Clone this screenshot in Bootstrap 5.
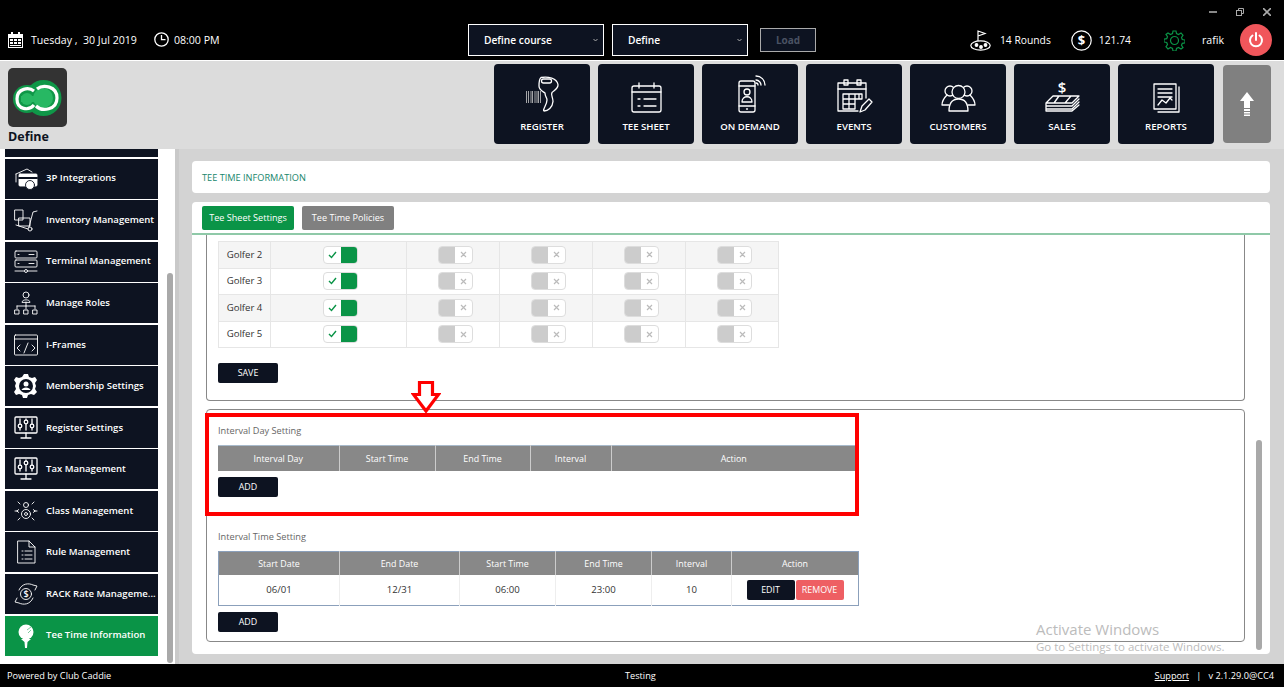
<!DOCTYPE html>
<html lang="en">
<head>
<meta charset="utf-8">
<title>Tee Time Information</title>
<link href="https://cdn.jsdelivr.net/npm/bootstrap@5.3.0/dist/css/bootstrap.min.css" rel="stylesheet">
<style>
html,body{height:687px;overflow:hidden}
body{position:relative;width:1284px;font-family:"Open Sans","Liberation Sans",sans-serif;font-size:10px;background:#000;color:#222}
svg{display:block;flex:none}
.ink{fill:none;stroke:#fff;stroke-width:1.3;stroke-linecap:round;stroke-linejoin:round}
.topbar{height:60px;background:#000;color:#fff;font-size:10.6px}
.chrome{height:24px;padding-right:13px;gap:19px}
.mainrow{height:32px;padding:0 12px 0 8px}
.mainrow span{padding-top:2px}
.leftpart{width:460px;gap:8px}
.timegap{margin-left:-3px}
.stat{font-size:10.3px}
.pick{width:136px;height:32px;background:#0d1321;border:1px solid #fff;color:#fff;font-size:10.2px;font-weight:600;padding-left:15px;padding-right:5px;margin-right:8px}
.loadbtn{width:56px;height:24px;margin-left:4px;background:#0d1321;border:1px solid #aaa;color:#4a5263;font-size:10px;font-weight:700}
.powerbtn{width:32px;height:32px;background:#f0565b;margin-left:16px}
.g9{margin-left:9px}.g20{margin-left:20px}.g7{margin-left:7px}.g33{margin-left:33px}.g17{margin-left:17px}
.white-line{height:1px;background:#fff}
.headband{height:88px;background:#dcdcdc;padding:3px 13px 0 8px}
.logobox{width:59px;height:59px;margin-top:4px;background:#333;border-radius:5px}
.logoname{font-size:12.5px;font-weight:700;color:#0d1321;line-height:18px;margin-top:1px}
.tilewrap{gap:8px;padding-right:9px}
.tile{width:96px;height:80px;background:#0d1321;color:#fff;border-radius:4px;font-size:9.6px;font-weight:600;padding-top:11px}
.tile svg{height:38px;width:44px}
.tile span{line-height:14px;margin-top:7px}
.upbtn{width:48px;height:78px;margin-top:1px;background:#808080;border-radius:4px}
.bodyrow{height:515px}
.sidepanel{position:relative;width:175px;background:#fff;padding-left:5px;overflow:hidden;border-bottom:1px solid #fff}
.sidestub{width:153px;height:8px;background:#0d1321;flex:none}
.sidelist{gap:1.55px}
.sideitem{width:153px;height:40px;flex:none;background:#0d1321;color:#fff;font-size:9.55px;font-weight:600;padding-left:9px;gap:8px;white-space:nowrap;overflow:hidden}
.sideitem svg{width:24px;height:24px}
.sideitem .ink{stroke-width:.9}
.sideitem.current{background:#0a9447}
.edge{width:4px;background:#c9c9c9}
.mainpane{background:#d3d3d3;padding:12px 14px 10px 13px;gap:9px}
.titlecard{height:32px;background:#fff;border-radius:4px;padding:2px 0 0 10px;color:#17866c;font-size:9.2px;flex:none}
.tabcard{background:#fff;border-radius:4px;overflow:hidden;position:relative}
.tabrow{height:33px;padding:4px 0 0 10px;gap:8px;border-bottom:2px solid #8fc9a8;flex:none}
.tabbtn{width:92px;height:24px;border-radius:2px;color:#fff;font-size:9.1px;font-weight:500;border:1px solid transparent;padding:0}
.tabon{background:#0a9447}
.taboff{background:#808080}
.scrollarea{padding:0 25px 12px 14px;gap:8px}
.boxtop{height:166px;border:1px solid #888;border-top:0;border-radius:0 0 4px 4px;padding:6px 12px 0 11px;flex:none}
.boxbottom{height:233px;border:1px solid #888;border-radius:4px;padding:13px 0 0 11px;flex:none}
.sectionlabel{font-size:9.2px;line-height:14px;padding-top:1px;color:#666;margin-bottom:7px}
.sectiongap{margin-top:32px}
.gtbl{width:560px;table-layout:fixed;margin:0;border-collapse:collapse;font-size:9.6px;color:#333;border:0;border-left:1px solid #8ba0bb;border-right:1px solid #8ba0bb;border-bottom:1px solid #8ba0bb}
.gtbl>tbody>tr>td{height:26.5px;padding:0;text-align:center;vertical-align:middle;border:1px solid #e6e6e6}
.gtbl>tbody>tr>td:not(:first-child){padding-left:4px}
.gtbl>tbody>tr.stripe>td{background:#f5f5f5}
.tgl{width:35px;height:18px;border:1px solid #ddd;border-radius:4px;overflow:hidden;margin:auto;background:#fff}
.tgl i{width:50%;height:100%;display:flex;align-items:center;justify-content:center}
.tgl.on i:last-child{background:#0a9447}
.tgl.off i:first-child{background:#ccc}
.darkbtn{display:block;width:60px;height:20px;background:#0d1321;color:#fff;border:0;border-radius:2px;font-size:8.9px;font-weight:500;padding:0}
.gap15{margin-top:15px}
.gap6{margin-top:6px}
.dtbl{table-layout:fixed;margin:0;border-collapse:collapse;font-size:9.6px;color:#333}
.dtbl>thead>tr>th{height:24px;padding:0;background:#888;color:#fff;font-size:8.9px;font-weight:500;text-align:center;vertical-align:middle;border:0;border-left:1px solid #ccc}
.dtbl>thead>tr>th:first-child{border-left:0}
.dtbl>tbody>tr>td{height:30px;padding:0;text-align:center;vertical-align:middle;border:0;border-left:1px solid #eee}
.dtbl>tbody>tr>td:first-child{border-left:0}
.daytable{width:638px;border-top:1px solid #a8bacb}
.daytable>thead>tr>th{height:25px}
.timetable{width:640px;border:1px solid #8ba0bb}
.minirow{gap:1px}
.minibtn{width:48px;height:20px;border:0;border-radius:2px;color:#fff;font-size:8.9px;padding:0}
.minibtn.edit{background:#0d1321;font-weight:500}
.minibtn.rem{background:#ee5f63}
.scrolltrack{position:absolute;width:6px;border-radius:3px;background:#a9a9a9}
.thumb-a{left:167px;top:124px;height:390px}
.thumb-b{right:8px;top:238px;height:210px}
.foot{height:23px;background:#000;color:#fff;font-size:9.2px;padding:0 10px 0 7px}
.foot a{color:#fff}
.footcenter{left:625px;position:absolute}
.redframe{position:absolute;left:205px;top:413px;width:654px;height:103px;border:4px solid #f00}
.redarrow{position:absolute;left:411px;top:380px}
.winmark{position:absolute;left:1036px;top:619px;color:#bcbcbc;pointer-events:none}
.winmark div:first-child{font-size:15px;line-height:20px}
.winmark div:last-child{font-size:11.5px;line-height:16px}
</style>
</head>
<body>
<svg width="0" height="0" class="position-absolute">
  <symbol id="mon" viewBox="0 0 24 24"><g class="ink" stroke-width="1"><rect x="1" y="1" width="22" height="16" rx="1"/><path d="M12 17v4M7 22h10M6 3v11M12 3v11M18 3v11"/><circle cx="6" cy="10" r="1.8" fill="#0d1321"/><circle cx="12" cy="6" r="1.8" fill="#0d1321"/><circle cx="18" cy="10" r="1.8" fill="#0d1321"/></g></symbol>
</svg>

<div class="topbar">
  <div class="chrome d-flex justify-content-end align-items-center">
    <svg width="8" height="8" viewBox="0 0 8 8"><rect y="3" width="8" height="2" fill="#888"/></svg>
    <svg width="8" height="8" viewBox="0 0 8 8" fill="none" stroke="#aaa"><rect x=".5" y="2.5" width="5" height="5"/><path d="M2.5 2.5v-2h5v5h-2"/></svg>
    <svg width="8" height="8" viewBox="0 0 8 8" stroke="#aaa" stroke-width="1.6"><path d="M0 0l8 8M8 0L0 8"/></svg>
  </div>
  <div class="mainrow d-flex align-items-center">
    <div class="leftpart d-flex align-items-center">
      <svg width="15" height="16" viewBox="0 0 15 16"><path fill="#fff" d="M0 2h3V0h2v2h5V0h2v2h3v14H0z"/><rect x="1" y="6" width="13" height="9" fill="#000"/><path fill="#fff" d="M2 7h3v2H2zM6 7h3v2H6zM10 7h3v2h-3zM2 10h3v2H2zM6 10h3v2H6zM10 10h3v2h-3zM2 13h11v1H2z"/></svg>
      <span>Tuesday ,&nbsp; 30 Jul 2019</span>
      <svg class="g9" width="15" height="15" viewBox="0 0 15 15" fill="none" stroke="#fff" stroke-width="1.3"><circle cx="7.5" cy="7.5" r="6.7"/><path d="M7.5 3v4.7h4"/></svg>
      <span class="timegap">08:00 PM</span>
    </div>
    <div class="pick d-flex align-items-center justify-content-between"><span>Define course</span><svg width="5" height="4" viewBox="0 0 5 4" fill="none" stroke="#aaa"><path d="M.5 1l2 2 2-2"/></svg></div>
    <div class="pick d-flex align-items-center justify-content-between"><span>Define</span><svg width="5" height="4" viewBox="0 0 5 4" fill="none" stroke="#aaa"><path d="M.5 1l2 2 2-2"/></svg></div>
    <button class="loadbtn p-0 ms-1" type="button">Load</button>
    <div class="ms-auto d-flex align-items-center">
      <svg width="21" height="21" viewBox="0 0 21 21" fill="none" stroke="#fff" stroke-width="1.2"><path d="M8 11V1l7 2.500-7 2.500"/><ellipse cx="10.500" cy="15.500" rx="9.700" ry="4.700"/><circle cx="6.500" cy="15" r="1.300" fill="#fff"/><circle cx="11" cy="17" r="1.300" fill="#fff"/><circle cx="15.500" cy="15" r="1.300" fill="#fff"/></svg>
      <span class="g9 stat">14 Rounds</span>
      <svg class="g20" width="21" height="21" viewBox="0 0 21 21"><circle cx="10.500" cy="10.500" r="9.700" fill="none" stroke="#fff" stroke-width="1.2"/><text x="10.500" y="15" text-anchor="middle" fill="#fff" font-size="13" font-weight="700" font-family="Open Sans">$</text></svg>
      <span class="g7 stat">121.74</span>
      <svg class="g33" width="21" height="21" viewBox="0 0 21 21" fill="none" stroke="#0a9447" stroke-width="1.200"><circle cx="10.500" cy="10.500" r="4"/><path d="M9 1h3l.5 2.600 2 .9L17 3l2 2.200-1.500 2.300.8 2 2.700.5v2.800l-2.700.5-.8 2 1.500 2.300L17 19l-2.500-1.500-2 .9L12 21H9l-.5-2.600-2-.9L4 19l-2-2.200 1.500-2.300-.8-2L0 12V9.200l2.700-.5.8-2L2 4.400 4 3l2.500 1.500 2-.9z"/></svg>
      <span class="g17">rafik</span>
      <div class="powerbtn rounded-circle d-flex align-items-center justify-content-center"><svg width="16" height="16" viewBox="0 0 16 16" fill="none" stroke="#fff" stroke-width="2" stroke-linecap="round"><path d="M8 1v7M4.500 3.500a6 6 0 1 0 7 0"/></svg></div>
    </div>
  </div>
  <div style="height:4px"></div>
</div>
<div class="white-line"></div>

<div class="headband d-flex justify-content-between">
  <div>
    <div class="logobox d-flex align-items-center justify-content-center">
      <svg width="49" height="36" viewBox="0 0 49 36"><g fill="#0f9748"><circle cx="14" cy="19" r="14"/><circle cx="30.500" cy="18" r="18"/></g><path d="M8 19h22" stroke="#27b863" stroke-width="6"/><circle cx="30" cy="18" r="10" fill="#27b863"/><circle cx="14" cy="19" r="6" fill="#27b863"/><g fill="none" stroke="#fff" stroke-width="3.200"><path d="M21 11C16 7 4 8 4 19s12 12 17 6"/><path d="M24 9c6-5 20-3 20 9s-15 14-21 8"/></g></svg>
    </div>
    <div class="logoname">Define</div>
  </div>
  <div class="d-flex align-items-start">
    <div class="tilewrap d-flex">
      <div class="tile d-flex flex-column align-items-center">
        <svg viewBox="0 0 44 38"><g stroke="#ccc" stroke-width=".8"><path d="M6.500 16v12M8.500 16v12M11 16v12M12.500 16v12M15 16v12M17 16v12M18.500 16v12M20.500 16v12"/></g><g class="ink" stroke-width="1"><path d="M21 2.500c7-1.500 16 1 17 7 .5 4-4 6-6 8-1.500 2 1 5 1 9-.5 6-5 9.500-9 9.500-2-1 3-6 3-11 0-3-2-3-2-7-2-1.500-6-3-6-7 0-3 0-7 2-8.500z"/><rect x="21.500" y="4" width="10" height="4" rx="2"/></g></svg>
        <span>REGISTER</span>
      </div>
      <div class="tile d-flex flex-column align-items-center">
        <svg viewBox="0 0 44 38" class="ink"><rect x="8" y="11" width="29" height="26" rx="2"/><path d="M8 17h29M15 8v5M30 8v5M14 24h2M20 24h12M14 31h2M20 31h12"/></svg>
        <span>TEE SHEET</span>
      </div>
      <div class="tile d-flex flex-column align-items-center">
        <svg viewBox="0 0 44 38" class="ink"><rect x="11" y="6" width="16" height="31" rx="2"/><path d="M11 11h16M11 31h16M18.500 34h1"/><circle cx="19" cy="17" r="3"/><path d="M14 27c0-7 10-7 10 0z"/><path d="M28 5c3 0 5 3 5 5M28 1c5 0 9 4 9 9M28 8c1 0 2 1 2 2"/></svg>
        <span>ON DEMAND</span>
      </div>
      <div class="tile d-flex flex-column align-items-center">
        <svg viewBox="0 0 44 38" class="ink"><path d="M26 36H6V8h28v15"/><path d="M6 14h28"/><rect x="12" y="5" width="4" height="5"/><rect x="25" y="5" width="4" height="5"/><path d="M11 19h12v15H11zM11 24h19v-5h-7M11 29h12M17 19v15M23 19v5M27 19v5"/><path d="M28 37l2-6 7-7 3 3-7 8z"/></svg>
        <span>EVENTS</span>
      </div>
      <div class="tile d-flex flex-column align-items-center">
        <svg viewBox="0 0 44 38" class="ink"><circle cx="14" cy="16" r="5"/><circle cx="31" cy="16" r="5"/><path d="M11 20c-3 3-5 7-5 10h7M34 20c3 3 5 7 5 10h-7"/><circle cx="22.500" cy="17" r="6.500" fill="#0d1321"/><path d="M13 36c0-10 5-12 9.500-12s9.500 2 9.500 12z" fill="#0d1321"/></svg>
        <span>CUSTOMERS</span>
      </div>
      <div class="tile d-flex flex-column align-items-center">
        <svg viewBox="0 0 44 38" class="ink"><text x="22" y="18" text-anchor="middle" fill="#fff" stroke="none" font-size="15" font-family="Open Sans">$</text><path d="M13 21h26l-7 7H6zM6 28v3h26l7-7M6 31v3h26l7-7M6 34v2h26l7-6M19 21l-5 7M31 21l-6 7"/></svg>
        <span>SALES</span>
      </div>
      <div class="tile d-flex flex-column align-items-center">
        <svg viewBox="0 0 44 38" class="ink"><path d="M35 12v25H14"/><rect x="10" y="9" width="22" height="25"/><path d="M14 14h14M14 18h14M14 22h14M14 30l4-5 4 3 4-5 2 2"/></svg>
        <span>REPORTS</span>
      </div>
    </div>
    <div class="upbtn d-flex align-items-center justify-content-center">
      <svg width="14" height="24" viewBox="0 0 14 24" fill="#fff"><path d="M7 0l7 9H10v7H4V9H0zM4 17h6v2H4zM4 20h6v1.500H4zM4 22.500h6V24H4z"/></svg>
    </div>
  </div>
</div>

<div class="bodyrow d-flex">
  <aside class="sidepanel d-flex flex-column">
    <div class="sidelist d-flex flex-column">
      <div class="sidestub"></div>
      <div class="sideitem d-flex align-items-center">
        <svg viewBox="0 0 24 24" class="ink"><path d="M2 7l11-5 5 3"/><path d="M2 7v8" /><rect x="5" y="7" width="18" height="12" rx="1" fill="#fff"/><path d="M5 11h18" stroke="#0d1321" stroke-width="2"/><circle cx="16" cy="18" r="4.500" fill="#fff" stroke="#0d1321"/></svg><span>3P Integrations</span>
      </div>
      <div class="sideitem d-flex align-items-center">
        <svg viewBox="0 0 24 24" class="ink"><rect x="1" y="2" width="8" height="10"/><rect x="5" y="10" width="11" height="8"/><path d="M23 3l-4 1-4 15M2 17l12 4"/><circle cx="16" cy="21" r="2"/></svg><span>Inventory Management</span>
      </div>
      <div class="sideitem d-flex align-items-center">
        <svg viewBox="0 0 24 24" class="ink"><rect x="1" y="1" width="22" height="7" rx="1"/><rect x="1" y="10" width="22" height="7" rx="1"/><path d="M1 21h22M4 4.500h1M4 13.500h1M15 4.500h5M15 13.500h5"/><circle cx="12" cy="21" r="1.500" fill="#0d1321"/></svg><span>Terminal Management</span>
      </div>
      <div class="sideitem d-flex align-items-center">
        <svg viewBox="0 0 24 24" class="ink"><circle cx="12" cy="4" r="3"/><path d="M8 11c0-3 8-3 8 0zM12 11v4M3 15h18M3 15v3M12 15v3M21 15v3"/><rect x="1" y="19" width="4" height="4"/><rect x="10" y="19" width="4" height="4"/><rect x="19" y="19" width="4" height="4"/></svg><span>Manage Roles</span>
      </div>
      <div class="sideitem d-flex align-items-center">
        <svg viewBox="0 0 24 24" class="ink"><rect x="0.500" y="2" width="23" height="20" rx="1"/><path d="M.5 6h23M6 12l-3 3 3 3M18 12l3 3-3 3M14 10l-4 10"/></svg><span>I-Frames</span>
      </div>
      <div class="sideitem d-flex align-items-center">
        <svg viewBox="0 0 24 24"><path fill="#fff" d="M10 0h4l1 3 3 1 3-1 2 3-2 3 1 3-1 3 2 3-3 3-3-1-3 1-1 3h-4l-1-3-3-1-3 1-2-3 2-3-1-3 1-3-2-3 2-3 3 1 3-1z"/><circle cx="12" cy="12" r="7" fill="#0d1321"/><circle cx="12" cy="10" r="2.500" fill="#fff"/><path d="M7.500 16c1-3.500 8-3.500 9 0z" fill="#fff"/></svg><span>Membership Settings</span>
      </div>
      <div class="sideitem d-flex align-items-center"><svg viewBox="0 0 24 24"><use href="#mon"/></svg><span>Register Settings</span></div>
      <div class="sideitem d-flex align-items-center"><svg viewBox="0 0 24 24"><use href="#mon"/></svg><span>Tax Management</span></div>
      <div class="sideitem d-flex align-items-center">
        <svg viewBox="0 0 24 24" class="ink"><circle cx="12" cy="15" r="4.500"/><circle cx="12" cy="15" r="1.500"/><circle cx="12" cy="6" r="2.500"/><path d="M1 12h3M23 12h-3M3 12l1.500-1.500M3 12l1.500 1.500M21 12l-1.500-1.500M21 12l-1.500 1.500M4 3l2 2M20 3l-2 2M4 21l2-2M20 21l-2-2"/></svg><span>Class Management</span>
      </div>
      <div class="sideitem d-flex align-items-center">
        <svg viewBox="0 0 24 24" class="ink"><path d="M4 1h11l6 6v16H4z"/><path d="M15 1v6h6M8 11h1M11 11h7M8 15h1M11 15h7M8 19h1M11 19h7"/></svg><span>Rule Management</span>
      </div>
      <div class="sideitem d-flex align-items-center">
        <svg viewBox="0 0 24 24" class="ink"><circle cx="12" cy="12" r="5.500"/><path d="M5 8c3-7 10-7 14-5l4 1-2 4M19 16c-3 7-10 7-14 5l-4-1 2-4"/><text x="12" y="15" text-anchor="middle" fill="#fff" stroke="none" font-size="9" font-family="Open Sans">$</text></svg><span>RACK Rate Manageme...</span>
      </div>
      <div class="sideitem current d-flex align-items-center">
        <svg viewBox="0 0 24 24"><circle cx="12" cy="8" r="7.500" fill="#fff"/><path fill="#fff" d="M7 15h10l-3.500 3-.5 6h-2l-.5-6z"/><path d="M13 6l4-3M14 9l3-3" stroke="#7fc99f"/></svg><span>Tee Time Information</span>
      </div>
    </div>
    <div class="scrolltrack thumb-a"></div>
  </aside>
  <div class="edge"></div>
  <main class="mainpane flex-grow-1 d-flex flex-column">
    <div class="titlecard d-flex align-items-center">TEE TIME INFORMATION</div>
    <div class="tabcard flex-grow-1 d-flex flex-column">
      <div class="tabrow d-flex">
        <button class="tabbtn tabon" type="button">Tee Sheet Settings</button>
        <button class="tabbtn taboff" type="button">Tee Time Policies</button>
      </div>
      <div class="scrollarea d-flex flex-column">
        <div class="boxtop">
          <table class="table gtbl">
            <colgroup><col width="52"><col width="136"><col width="93"><col width="93"><col width="93"><col width="93"></colgroup>
            <tbody>
              <tr class="stripe"><td>Golfer 2</td>
                <td><div class="tgl on d-flex"><i><svg width="9" height="8" viewBox="0 0 9 8" fill="none" stroke="#0a9447" stroke-width="1.400"><path d="M1 4l2.500 2.500L8 1"/></svg></i><i></i></div></td>
                <td><div class="tgl off d-flex"><i></i><i><svg width="7" height="7" viewBox="0 0 7 7" stroke="#bbb" stroke-width="1.200"><path d="M1 1l5 5M6 1L1 6"/></svg></i></div></td>
                <td><div class="tgl off d-flex"><i></i><i><svg width="7" height="7" viewBox="0 0 7 7" stroke="#bbb" stroke-width="1.200"><path d="M1 1l5 5M6 1L1 6"/></svg></i></div></td>
                <td><div class="tgl off d-flex"><i></i><i><svg width="7" height="7" viewBox="0 0 7 7" stroke="#bbb" stroke-width="1.200"><path d="M1 1l5 5M6 1L1 6"/></svg></i></div></td>
                <td><div class="tgl off d-flex"><i></i><i><svg width="7" height="7" viewBox="0 0 7 7" stroke="#bbb" stroke-width="1.200"><path d="M1 1l5 5M6 1L1 6"/></svg></i></div></td>
              </tr>
              <tr><td>Golfer 3</td>
                <td><div class="tgl on d-flex"><i><svg width="9" height="8" viewBox="0 0 9 8" fill="none" stroke="#0a9447" stroke-width="1.400"><path d="M1 4l2.500 2.500L8 1"/></svg></i><i></i></div></td>
                <td><div class="tgl off d-flex"><i></i><i><svg width="7" height="7" viewBox="0 0 7 7" stroke="#bbb" stroke-width="1.200"><path d="M1 1l5 5M6 1L1 6"/></svg></i></div></td>
                <td><div class="tgl off d-flex"><i></i><i><svg width="7" height="7" viewBox="0 0 7 7" stroke="#bbb" stroke-width="1.200"><path d="M1 1l5 5M6 1L1 6"/></svg></i></div></td>
                <td><div class="tgl off d-flex"><i></i><i><svg width="7" height="7" viewBox="0 0 7 7" stroke="#bbb" stroke-width="1.200"><path d="M1 1l5 5M6 1L1 6"/></svg></i></div></td>
                <td><div class="tgl off d-flex"><i></i><i><svg width="7" height="7" viewBox="0 0 7 7" stroke="#bbb" stroke-width="1.200"><path d="M1 1l5 5M6 1L1 6"/></svg></i></div></td>
              </tr>
              <tr class="stripe"><td>Golfer 4</td>
                <td><div class="tgl on d-flex"><i><svg width="9" height="8" viewBox="0 0 9 8" fill="none" stroke="#0a9447" stroke-width="1.400"><path d="M1 4l2.500 2.500L8 1"/></svg></i><i></i></div></td>
                <td><div class="tgl off d-flex"><i></i><i><svg width="7" height="7" viewBox="0 0 7 7" stroke="#bbb" stroke-width="1.200"><path d="M1 1l5 5M6 1L1 6"/></svg></i></div></td>
                <td><div class="tgl off d-flex"><i></i><i><svg width="7" height="7" viewBox="0 0 7 7" stroke="#bbb" stroke-width="1.200"><path d="M1 1l5 5M6 1L1 6"/></svg></i></div></td>
                <td><div class="tgl off d-flex"><i></i><i><svg width="7" height="7" viewBox="0 0 7 7" stroke="#bbb" stroke-width="1.200"><path d="M1 1l5 5M6 1L1 6"/></svg></i></div></td>
                <td><div class="tgl off d-flex"><i></i><i><svg width="7" height="7" viewBox="0 0 7 7" stroke="#bbb" stroke-width="1.200"><path d="M1 1l5 5M6 1L1 6"/></svg></i></div></td>
              </tr>
              <tr><td>Golfer 5</td>
                <td><div class="tgl on d-flex"><i><svg width="9" height="8" viewBox="0 0 9 8" fill="none" stroke="#0a9447" stroke-width="1.400"><path d="M1 4l2.500 2.500L8 1"/></svg></i><i></i></div></td>
                <td><div class="tgl off d-flex"><i></i><i><svg width="7" height="7" viewBox="0 0 7 7" stroke="#bbb" stroke-width="1.200"><path d="M1 1l5 5M6 1L1 6"/></svg></i></div></td>
                <td><div class="tgl off d-flex"><i></i><i><svg width="7" height="7" viewBox="0 0 7 7" stroke="#bbb" stroke-width="1.200"><path d="M1 1l5 5M6 1L1 6"/></svg></i></div></td>
                <td><div class="tgl off d-flex"><i></i><i><svg width="7" height="7" viewBox="0 0 7 7" stroke="#bbb" stroke-width="1.200"><path d="M1 1l5 5M6 1L1 6"/></svg></i></div></td>
                <td><div class="tgl off d-flex"><i></i><i><svg width="7" height="7" viewBox="0 0 7 7" stroke="#bbb" stroke-width="1.200"><path d="M1 1l5 5M6 1L1 6"/></svg></i></div></td>
              </tr>
            </tbody>
          </table>
          <button class="darkbtn gap15" type="button">SAVE</button>
        </div>
        <div class="boxbottom">
          <div class="sectionlabel">Interval Day Setting</div>
          <table class="table dtbl daytable">
            <colgroup><col width="121"><col width="96"><col width="95"><col width="81"><col width="245"></colgroup>
            <thead><tr><th>Interval Day</th><th>Start Time</th><th>End Time</th><th>Interval</th><th>Action</th></tr></thead>
          </table>
          <button class="darkbtn gap6" type="button">ADD</button>
          <div class="sectionlabel sectiongap">Interval Time Setting</div>
          <table class="table dtbl timetable">
            <colgroup><col width="121"><col width="120"><col width="96"><col width="96"><col width="80"><col width="127"></colgroup>
            <thead><tr><th>Start Date</th><th>End Date</th><th>Start Time</th><th>End Time</th><th>Interval</th><th>Action</th></tr></thead>
            <tbody><tr><td>06/01</td><td>12/31</td><td>06:00</td><td>23:00</td><td>10</td><td><div class="minirow d-flex justify-content-center"><button class="minibtn edit" type="button">EDIT</button><button class="minibtn rem" type="button">REMOVE</button></div></td></tr></tbody>
          </table>
          <button class="darkbtn gap6" type="button">ADD</button>
        </div>
      </div>
      <div class="scrolltrack thumb-b"></div>
    </div>
  </main>
</div>

<footer class="foot d-flex align-items-center justify-content-between">
  <span>Powered by Club Caddie</span>
  <span class="footcenter">Testing</span>
  <span><a href="#">Support</a> &nbsp;&nbsp;|&nbsp;&nbsp; v 2.1.29.0@CC4</span>
</footer>

<div class="redframe"></div>
<svg class="redarrow" width="30" height="35" viewBox="0 0 30 35" fill="#fff" stroke="#f00" stroke-width="3.200"><path d="M8.500 2.500h13v12h6L15 31 2.500 14.500h6z"/></svg>
<div class="winmark"><div>Activate Windows</div><div>Go to Settings to activate Windows.</div></div>
</body>
</html>
